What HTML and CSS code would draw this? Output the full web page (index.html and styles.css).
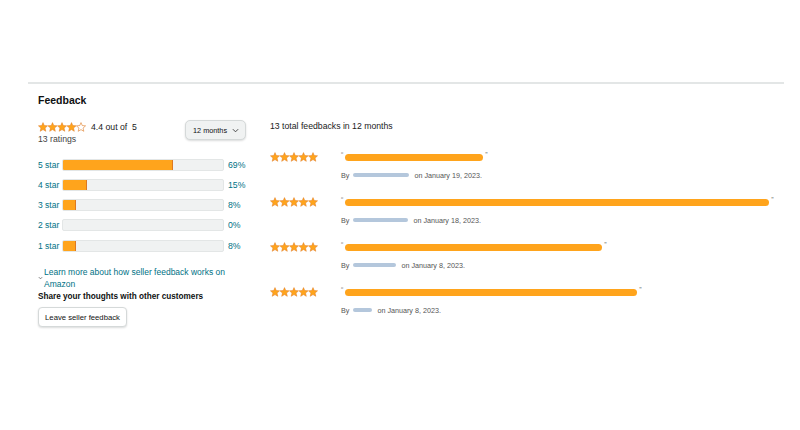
FILE: index.html
```html
<!DOCTYPE html>
<html lang="en">
<head>
<meta charset="utf-8">
<title>Feedback</title>
<link rel="stylesheet" href="styles.css">
</head>
<body>
<svg class="defs" width="0" height="0" aria-hidden="true">
  <defs>
    <path id="star" d="M5 0.6 L6.25 3.55 L9.55 3.85 L7.05 6.05 L7.8 9.3 L5 7.6 L2.2 9.3 L2.95 6.05 L0.45 3.85 L3.75 3.55 Z"/>
  </defs>
</svg>
<div class="page">
  <div class="rule"></div>
  <section class="feedback">
    <h2 class="title">Feedback</h2>
    <div class="cols">
      <div class="left">
        <div class="summary">
          <div class="summary-text">
            <div class="avg">
              <svg class="stars" viewBox="0 0 48 10" width="48" height="10">
                <use href="#star" x="0" class="full"/>
                <use href="#star" x="9.5" class="full"/>
                <use href="#star" x="19" class="full"/>
                <use href="#star" x="28.5" class="full"/>
                <use href="#star" x="38" class="empty"/>
              </svg>
              <span class="avg-text">4.4 out of&nbsp; 5</span>
            </div>
            <div class="count">13 ratings</div>
          </div>
          <button class="dropdown">12 months
            <svg class="chev-down" viewBox="0 0 8 5" width="7" height="5"><path d="M1 1 L4 4 L7 1"/></svg>
          </button>
        </div>
        <div class="hist">
          <div class="hist-row"><a class="hist-label">5 star</a><div class="meter"><div class="fill" style="width:69%"></div></div><a class="pct">69%</a></div>
          <div class="hist-row"><a class="hist-label">4 star</a><div class="meter"><div class="fill" style="width:15%"></div></div><a class="pct">15%</a></div>
          <div class="hist-row"><a class="hist-label">3 star</a><div class="meter"><div class="fill" style="width:8%"></div></div><a class="pct">8%</a></div>
          <div class="hist-row"><a class="hist-label">2 star</a><div class="meter"></div><a class="pct">0%</a></div>
          <div class="hist-row"><a class="hist-label">1 star</a><div class="meter"><div class="fill" style="width:8%"></div></div><a class="pct">8%</a></div>
        </div>
        <div class="learn">
          <svg class="chev-small" viewBox="0 0 6 4" width="5" height="4"><path d="M1 1 L3 3 L5 1"/></svg>
          <a class="learn-link">Learn more about how seller feedback works on Amazon</a>
        </div>
        <div class="share">Share your thoughts with other customers</div>
        <button class="leave">Leave seller feedback</button>
      </div>
      <div class="right">
        <div class="total">13 total feedbacks in 12 months</div>
        <div class="fb-list">
          <div class="fb-row">
            <svg class="row-stars" viewBox="0 0 48 10" width="48" height="10">
              <use href="#star" x="0"/><use href="#star" x="9.5"/><use href="#star" x="19"/><use href="#star" x="28.5"/><use href="#star" x="38"/>
            </svg>
            <div class="fb-body">
              <div class="quote-line"><span class="q">&#8220;</span><span class="redact" style="width:138px"></span><span class="q">&#8221;</span></div>
              <div class="by-line"><span>By</span><span class="name" style="width:56px"></span><span>on January 19, 2023.</span></div>
            </div>
          </div>
          <div class="fb-row">
            <svg class="row-stars" viewBox="0 0 48 10" width="48" height="10">
              <use href="#star" x="0"/><use href="#star" x="9.5"/><use href="#star" x="19"/><use href="#star" x="28.5"/><use href="#star" x="38"/>
            </svg>
            <div class="fb-body">
              <div class="quote-line"><span class="q">&#8220;</span><span class="redact" style="width:424px"></span><span class="q">&#8221;</span></div>
              <div class="by-line"><span>By</span><span class="name" style="width:55px"></span><span>on January 18, 2023.</span></div>
            </div>
          </div>
          <div class="fb-row">
            <svg class="row-stars" viewBox="0 0 48 10" width="48" height="10">
              <use href="#star" x="0"/><use href="#star" x="9.5"/><use href="#star" x="19"/><use href="#star" x="28.5"/><use href="#star" x="38"/>
            </svg>
            <div class="fb-body">
              <div class="quote-line"><span class="q">&#8220;</span><span class="redact" style="width:257px"></span><span class="q">&#8221;</span></div>
              <div class="by-line"><span>By</span><span class="name" style="width:43px"></span><span>on January 8, 2023.</span></div>
            </div>
          </div>
          <div class="fb-row">
            <svg class="row-stars" viewBox="0 0 48 10" width="48" height="10">
              <use href="#star" x="0"/><use href="#star" x="9.5"/><use href="#star" x="19"/><use href="#star" x="28.5"/><use href="#star" x="38"/>
            </svg>
            <div class="fb-body">
              <div class="quote-line"><span class="q">&#8220;</span><span class="redact" style="width:292px"></span><span class="q">&#8221;</span></div>
              <div class="by-line"><span>By</span><span class="name" style="width:19px"></span><span>on January 8, 2023.</span></div>
            </div>
          </div>
        </div>
      </div>
    </div>
  </section>
</div>
</body>
</html>
```

FILE: styles.css
```css
html, body {
  margin: 0;
  padding: 0;
  background: #ffffff;
}
body {
  font-family: "Liberation Sans", Arial, sans-serif;
  color: #0f1111;
  width: 800px;
  height: 430px;
  overflow: hidden;
}
.defs {
  position: absolute;
  width: 0;
  height: 0;
}
.page {
  padding-top: 82px;
}
.rule {
  margin: 0 16px 0 28px;
  height: 2px;
  background: #e3e6e6;
}
.feedback {
  padding-left: 38px;
}
.title {
  margin: 9px 0 0;
  font-size: 10.5px;
  line-height: 14px;
  font-weight: 700;
}
.cols {
  display: flex;
  gap: 24px;
  margin-top: 13px;
}
.left {
  width: 208px;
  flex: none;
}
.summary {
  display: flex;
  justify-content: space-between;
  align-items: flex-start;
}
.avg {
  display: flex;
  align-items: center;
  height: 13px;
  font-size: 8.7px;
  color: #222;
}
.stars {
  display: block;
  margin-right: 5px;
}
.stars .full, .row-stars use {
  fill: #ffa41c;
  stroke: #de7921;
  stroke-width: 0.5;
}
.stars .empty {
  fill: none;
  stroke: #de7921;
  stroke-width: 0.6;
}
.count {
  font-size: 8.7px;
  line-height: 13px;
  color: #444;
}
.dropdown {
  margin-top: 0;
  width: 61px;
  height: 20px;
  padding: 0 0 0 7px;
  display: flex;
  align-items: center;
  gap: 5px;
  font-family: inherit;
  font-size: 7.3px;
  color: #0f1111;
  background: #f0f2f2;
  border: 1px solid #d5d9d9;
  border-radius: 5px;
  box-shadow: 0 1px 2px rgba(15, 17, 17, 0.15);
}
.chev-down path, .chev-small path {
  fill: none;
  stroke: #444;
  stroke-width: 1.1;
}
.hist {
  margin-top: 8.5px;
}
.hist-row {
  display: flex;
  align-items: center;
  height: 20.25px;
}
.hist-label {
  width: 24px;
  flex: none;
  font-size: 8.5px;
  color: #007185;
}
.meter {
  width: 162px;
  height: 12px;
  box-sizing: border-box;
  background: #f0f2f2;
  border: 1px solid #e3e6e6;
  border-radius: 2px;
  overflow: hidden;
  flex: none;
}
.fill {
  height: 100%;
  background: #ffa41c;
  border-right: 1px solid #de7921;
  box-sizing: border-box;
}
.pct {
  margin-left: 4px;
  font-size: 8.7px;
  color: #007185;
}
.learn {
  margin-top: 10px;
  display: flex;
  align-items: center;
}
.chev-small {
  flex: none;
  width: 5px;
  margin-right: 1px;
}
.chev-small path {
  stroke: #555;
  stroke-width: 0.9;
}
.learn-link {
  font-size: 8.5px;
  line-height: 12px;
  color: #007185;
  width: 196px;
}
.share {
  font-size: 8.2px;
  font-weight: 700;
  line-height: 13px;
}
.leave {
  margin-top: 4.5px;
  width: 89px;
  height: 20px;
  padding: 0;
  font-family: inherit;
  font-size: 7.7px;
  color: #0f1111;
  background: #fff;
  border: 1px solid #d5d9d9;
  border-radius: 4px;
  box-shadow: 0 1px 2px rgba(15, 17, 17, 0.15);
}
.right {
  flex: 1;
}
.total {
  font-size: 8.7px;
  line-height: 13px;
  color: #222;
}
.fb-list {
  margin-top: 17px;
}
.fb-row {
  display: flex;
  align-items: flex-start;
  height: 45px;
}
.row-stars {
  display: block;
  flex: none;
  margin-top: 2px;
  margin-right: 23px;
}
.quote-line {
  display: flex;
  align-items: center;
  height: 14px;
}
.q {
  font-size: 7px;
  color: #777;
  align-self: flex-start;
  line-height: 8px;
  margin-top: 1px;
}
.redact {
  display: block;
  height: 7px;
  border-radius: 4px;
  background: #ffa41c;
  margin: 0 2px 0 2px;
}
.by-line {
  display: flex;
  align-items: center;
  height: 14px;
  margin-top: 4px;
  font-size: 7.2px;
  color: #555;
}
.name {
  display: block;
  height: 4px;
  border-radius: 2px;
  background: #b4c7dc;
  margin: 0 5px 0 4px;
}
```
